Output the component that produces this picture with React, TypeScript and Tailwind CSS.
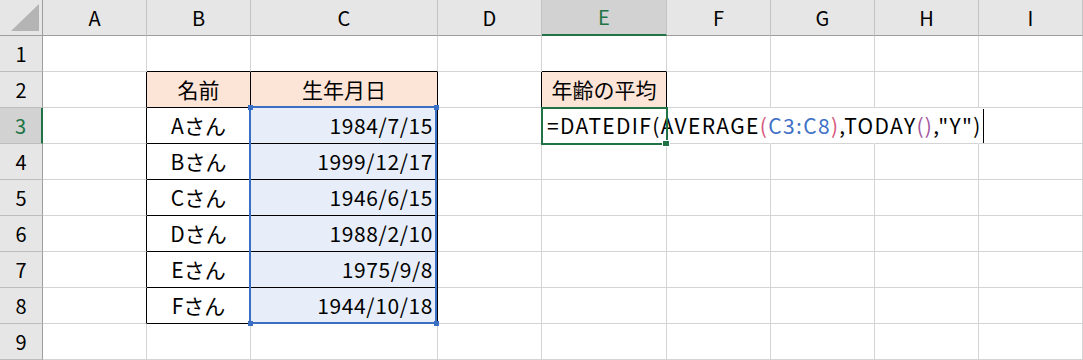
import React from 'react';

const FONT = "font-['Noto_Sans_CJK_JP','Noto_Sans',sans-serif]";

type CellSpec = {
  text?: React.ReactNode;
  r?: string;
  b?: string;
  bg?: string;
  align?: string;
};

const GRID_R = 'border-r-[#d4d4d4]';
const GRID_B = 'border-b-[#d4d4d4]';

const columns = ['A', 'B', 'C', 'D', 'E', 'F', 'G', 'H', 'I'];

const people = [
  ['Aさん', '1984/7/15'],
  ['Bさん', '1999/12/17'],
  ['Cさん', '1946/6/15'],
  ['Dさん', '1988/2/10'],
  ['Eさん', '1975/9/8'],
  ['Fさん', '1944/10/18'],
];

const formula = (
  <span className="flex items-center whitespace-nowrap tracking-[1.35px]">
    <span>
      =DATEDIF(AVERAGE
      <span className="text-[#d6567e]">(</span>
      <span className="text-[#3f72c6]">C3:C8</span>
      <span className="text-[#d6567e]">)</span>
      ,TODAY
      <span className="text-[#a2579e]">()</span>
      ,"Y")
    </span>
    {/* text cursor */}
    <span className="ml-px w-px h-[34px] bg-black" />
  </span>
);

function buildCells(): Record<string, CellSpec> {
  const cells: Record<string, CellSpec> = {
    B1: { b: 'border-b-black' },
    C1: { b: 'border-b-black' },
    E1: { b: 'border-b-black' },
    B2: { text: '名前', r: 'border-r-black', b: 'border-b-black', bg: 'bg-[#fce4d6]', align: 'justify-center' },
    C2: { text: '生年月日', r: 'border-r-black', b: 'border-b-black', bg: 'bg-[#fce4d6]', align: 'justify-center' },
    D2: { r: 'border-r-black' },
    E2: { text: '年齢の平均', r: 'border-r-black', b: 'border-b-black', bg: 'bg-[#fce4d6]', align: 'justify-center' },
    E3: { text: formula, r: 'border-r-transparent', align: 'justify-start pl-[5px] z-10' },
    F3: { r: 'border-r-transparent' },
    G3: { r: 'border-r-transparent' },
    H3: { r: 'border-r-transparent' },
  };
  for (let i = 2; i <= 8; i++) {
    cells['A' + i] = { ...(cells['A' + i] || {}), r: 'border-r-black' };
  }
  people.forEach(([name, date], i) => {
    const row = i + 3;
    cells['B' + row] = { text: name, r: 'border-r-black', b: 'border-b-black', align: 'justify-center' };
    cells['C' + row] = {
      text: <span className="tracking-[0.6px]">{date}</span>,
      r: 'border-r-black',
      b: 'border-b-black',
      bg: 'bg-[#e7eef9]',
      align: 'justify-end pr-[4px]',
    };
  });
  return cells;
}

const cells = buildCells();

function Corner() {
  return (
    <div className="relative h-[36px] bg-[#e6e6e6] border-r border-b border-r-[#9e9e9e] border-b-[#9e9e9e]">
      <svg className="absolute left-0 top-0" width="42" height="35" viewBox="0 0 42 35">
        <polygon points="11,31 39,31 39,4" fill="#b4b4b4" />
      </svg>
    </div>
  );
}

export default function App() {
  return (
    <div className={`relative w-[1083px] h-[360px] overflow-hidden bg-white text-black ${FONT}`}>
      <div className="grid grid-cols-[43px_104px_104px_187px_104px_125px_104px_104px_104px_104px] grid-rows-[repeat(10,36px)] text-[21px]">
        <Corner />
        {columns.map((c) =>
          c === 'E' ? (
            <div
              key={c}
              className="flex items-center justify-center bg-[#d2d2d2] border-r border-b-2 border-r-[#c4c4c4] border-b-[#217346] text-[#217346] text-[20px] leading-none"
            >
              {c}
            </div>
          ) : (
            <div
              key={c}
              className="flex items-center justify-center bg-[#e6e6e6] border-r border-b border-r-[#c4c4c4] border-b-[#9e9e9e] text-[20px] leading-none"
            >
              {c}
            </div>
          )
        )}
        {Array.from({ length: 9 }, (_, i) => i + 1).map((row) => (
          <React.Fragment key={row}>
            {row === 3 ? (
              <div className="flex items-center justify-center bg-[#d2d2d2] border-r-2 border-b border-r-[#217346] border-b-[#bdbdbd] text-[#217346] text-[20px] leading-none">
                {row}
              </div>
            ) : (
              <div className="flex items-center justify-center bg-[#e6e6e6] border-r border-b border-r-[#9e9e9e] border-b-[#bdbdbd] text-[20px] leading-none">
                {row}
              </div>
            )}
            {columns.map((c) => {
              const spec = cells[c + row] || {};
              return (
                <div
                  key={c}
                  className={`relative flex items-center overflow-visible leading-none border-r border-b ${spec.r || GRID_R} ${
                    spec.b || GRID_B
                  } ${spec.bg || 'bg-white'} ${spec.align || ''}`}
                >
                  {spec.text}
                </div>
              );
            })}
          </React.Fragment>
        ))}
      </div>

      {/* range reference C3:C8 */}
      <div className="absolute left-[249px] top-[106px] w-[188px] h-[218px] border-2 border-[#3a6fc4] pointer-events-none">
        <div className="absolute -left-[3px] -top-[3px] w-[5px] h-[5px] bg-[#3a6fc4]" />
        <div className="absolute -right-[4px] -top-[3px] w-[5px] h-[5px] bg-[#3a6fc4]" />
        <div className="absolute -left-[3px] -bottom-[4px] w-[5px] h-[5px] bg-[#3a6fc4]" />
        <div className="absolute -right-[4px] -bottom-[4px] w-[5px] h-[5px] bg-[#3a6fc4]" />
      </div>

      {/* active cell E3 */}
      <div className="absolute left-[541px] top-[107px] w-[127px] h-[38px] border-2 border-[#217346] z-20 pointer-events-none">
        <div className="absolute -right-[4px] -bottom-[4px] w-[8px] h-[7px] bg-[#217346] border border-white" />
      </div>
    </div>
  );
}
